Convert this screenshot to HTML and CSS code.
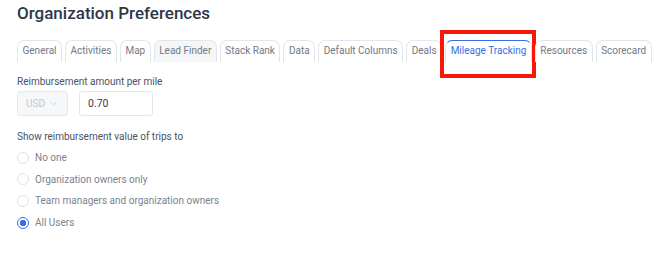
FILE: index.html
```html
<!DOCTYPE html>
<html lang="en">
<head>
  <meta charset="UTF-8" />
  <meta name="viewport" content="width=device-width, initial-scale=1.0"/>
  <link rel="stylesheet" href="styles.css">
  <title>Organization Preferences</title>
</head>
<body>
  <div class="page">
    <h1 class="page-title">Organization Preferences</h1>

    <!-- Pestañas de preferencias -->
    <div class="tabs">
      <div class="tab">General</div>
      <div class="tab">Activities</div>
      <div class="tab">Map</div>
      <div class="tab hover">Lead Finder</div>
      <div class="tab">Stack Rank</div>
      <div class="tab">Data</div>
      <div class="tab">Default Columns</div>
      <div class="tab">Deals</div>
      <div class="tab active">
        Mileage Tracking
        <span class="callout"></span>
      </div>
      <div class="tab">Resources</div>
      <div class="tab">Scorecard</div>
    </div>

    <div class="form-group">
      <div class="form-label">Reimbursement amount per mile</div>
      <div class="amount-row">
        <div class="currency-select">
          <span>USD</span>
          <svg class="chevron" width="7" height="5" viewBox="0 0 7 5">
            <path d="M0.5 0.8 L3.5 3.8 L6.5 0.8" fill="none" stroke="#c9cdd4" stroke-width="0.9"/>
          </svg>
        </div>
        <input class="amount-input" type="text" value="0.70">
      </div>
    </div>

    <div class="form-group radios">
      <div class="form-label">Show reimbursement value of trips to</div>
      <label class="radio"><span class="radio-dot"></span>No one</label>
      <label class="radio"><span class="radio-dot"></span>Organization owners only</label>
      <label class="radio"><span class="radio-dot"></span>Team managers and organization owners</label>
      <label class="radio checked"><span class="radio-dot"></span>All Users</label>
    </div>
  </div>
</body>
</html>
```

FILE: styles.css
```css
* {
  box-sizing: border-box;
}

html, body {
  margin: 0;
  padding: 0;
  background: #ffffff;
  font-family: Roboto, 'Liberation Sans', sans-serif;
}

:root {
  --title-color: #2f3747;
  --text-color: #4b5261;
  --muted-color: #7c828e;
  --border-color: #e2e5ea;
  --blue: #3a6ee8;
}

.page {
  padding: 2px 17px 0;
}

.page-title {
  margin: 0;
  font-size: 17px;
  font-weight: 500;
  line-height: 22px;
  color: var(--title-color);
}

.tabs {
  display: flex;
  gap: 3px;
  margin-top: 16px;
}

.tab {
  position: relative;
  height: 22px;
  padding: 0 4.5px;
  border: 1px solid var(--border-color);
  border-bottom: none;
  border-radius: 7px 7px 0 0;
  font-size: 10px;
  line-height: 20px;
  color: #737985;
  white-space: nowrap;
}

.tab.hover {
  background: #f5f6f8;
}

.tab.active {
  border-color: var(--blue) var(--border-color) transparent;
  color: var(--blue);
}

/* recuadro rojo de anotación */
.callout {
  position: absolute;
  top: -11px;
  left: -6px;
  right: -5px;
  bottom: -16px;
  border: 4px solid #f5190c;
  pointer-events: none;
}

.form-group {
  margin-top: 14px;
}

.form-label {
  font-size: 10px;
  line-height: 12px;
  color: var(--text-color);
}

.amount-row {
  display: flex;
  gap: 11px;
  margin-top: 3px;
}

.currency-select {
  display: flex;
  align-items: center;
  gap: 5px;
  width: 51px;
  height: 25px;
  padding: 0 8px;
  border: 1px solid #e6e8ec;
  border-radius: 3px;
  background: #f6f7f9;
  color: #c3c7ce;
  font-size: 10px;
}

.amount-input {
  width: 74px;
  height: 25px;
  padding: 0 8px;
  border: 1px solid var(--border-color);
  border-radius: 3px;
  font-family: Roboto, 'Liberation Sans', sans-serif;
  font-size: 10.5px;
  color: #353b47;
  outline: none;
}

.radios {
  margin-top: 15px;
}

.radios .form-label {
  margin-bottom: 4px;
}

.radio {
  display: flex;
  align-items: center;
  gap: 6px;
  height: 21.6px;
  font-size: 10px;
  color: var(--muted-color);
}

.radio-dot {
  width: 12px;
  height: 12px;
  border: 1px solid #dde1e7;
  border-radius: 50%;
  background: #fff;
}

.radio.checked .radio-dot {
  border-color: var(--blue);
  background: radial-gradient(circle, var(--blue) 0 3px, #fff 3.5px);
}
```
